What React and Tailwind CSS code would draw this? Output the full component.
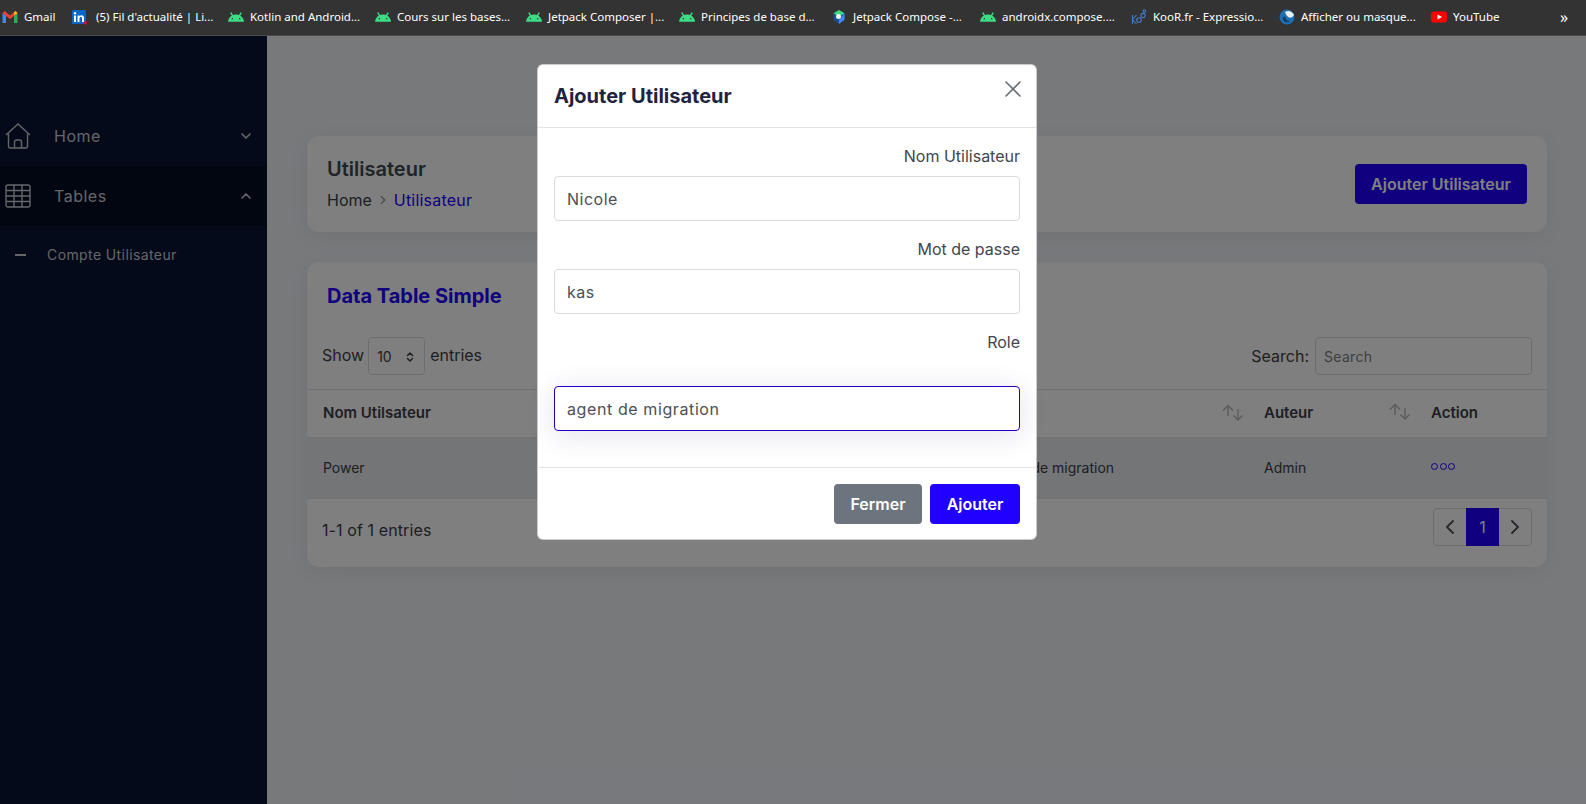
import React from 'react';
import { SiAndroid } from 'react-icons/si';
import { ChevronDown, ChevronUp, ChevronLeft, ChevronRight, X, ChevronsUpDown } from 'lucide-react';

const GmailIcon = () => (
  <svg width="16" height="16" viewBox="0 0 16 16">
    <path d="M.5 14V4l3.500 2.500V14z" fill="#4285f4" />
    <path d="M12 14V6.500L15.500 4v10z" fill="#34a853" />
    <path d="M.5 4 2.500 2 8 6.500 13.500 2l2 2L8 10z" fill="#ea4335" />
    <path d="M13.500 2l2 2-3.500 2.500V3.300z" fill="#fbbc04" />
  </svg>
);

const LinkedinIcon = () => (
  <svg width="18" height="16" viewBox="0 0 18 16">
    <rect x="0" y="1" width="14" height="14" rx="1" fill="#0a66c2" />
    <rect x="2" y="6.500" width="2" height="6.500" fill="#fff" />
    <circle cx="3" cy="4.200" r="1.200" fill="#fff" />
    <path d="M5.500 6.500h2v1c.5-.8 1.200-1.200 2.100-1.200 1.600 0 2.400 1 2.400 2.800V13h-2V9.500c0-1-.3-1.500-1.200-1.500s-1.300.6-1.300 1.500V13h-2z" fill="#fff" />
    <circle cx="13.500" cy="14" r="1.700" fill="#d11124" />
  </svg>
);

const AndroidIcon = () => <SiAndroid size={16} color="#3ddc84" />;

const ComposeIcon = () => (
  <svg width="16" height="16" viewBox="0 0 16 16">
    <path d="M8 1l5.500 3.200v6.600L8 15l-5.500-4.200V4.200z" fill="#1c4f8c" />
    <path d="M8 1l5.500 3.200L8 7.500 2.500 4.200z" fill="#3ddc84" />
    <path d="M13.500 4.200v6.600L8 15v-4z" fill="#4285f4" />
    <circle cx="7.500" cy="7.500" r="2.500" fill="#e8f4f0" />
  </svg>
);

const KoorIcon = () => (
  <svg width="16" height="16" viewBox="0 0 16 16" fill="none" stroke="#4a78c8" strokeWidth="1.100">
    <path d="M1.500 6v9M5.500 6l-4 4.500 4 4.500" />
    <circle cx="8" cy="11" r="2.300" />
    <circle cx="12" cy="6.500" r="2.100" />
    <circle cx="13.500" cy="2" r="1.300" />
  </svg>
);

const GlobeIcon = () => (
  <svg width="16" height="16" viewBox="0 0 16 16">
    <circle cx="8" cy="8" r="7.500" fill="#1f6fb2" />
    <path d="M6 3c3-2 7-1 9 3-1 2-3 3-5 2.500C8.500 8 7 6 6 3z" fill="#e8f1f8" />
    <path d="M6 7c0 3 2 5 5 5-2 2-5 1.500-6.500-.5S4.500 8 6 7z" fill="#0d3c66" />
  </svg>
);

const YoutubeIcon = () => (
  <svg width="16" height="16" viewBox="0 0 16 16">
    <rect x="0" y="2.500" width="16" height="11" rx="3" fill="#ff0000" />
    <path d="M6.500 5.500 11 8l-4.500 2.500z" fill="#fff" />
  </svg>
);

const bookmarks = [
  { label: 'Gmail', icon: <GmailIcon />, w: 'w-[70px]' },
  { label: "(5) Fil d'actualité | Li...", icon: <LinkedinIcon />, w: 'w-[156px]' },
  { label: 'Kotlin and Android...', icon: <AndroidIcon />, w: 'w-[147px]' },
  { label: 'Cours sur les bases...', icon: <AndroidIcon />, w: 'w-[151px]' },
  { label: 'Jetpack Composer |...', icon: <AndroidIcon />, w: 'w-[153px]' },
  { label: 'Principes de base d...', icon: <AndroidIcon />, w: 'w-[152px]' },
  { label: 'Jetpack Compose -...', icon: <ComposeIcon />, w: 'w-[149px]' },
  { label: 'androidx.compose....', icon: <AndroidIcon />, w: 'w-[151px]' },
  { label: 'KooR.fr - Expressio...', icon: <KoorIcon />, w: 'w-[148px]' },
  { label: 'Afficher ou masque...', icon: <GlobeIcon />, w: 'w-[152px]' },
  { label: 'YouTube', icon: <YoutubeIcon />, w: 'w-[100px]' },
];

const SortIcon = () => (
  <svg width="22" height="18" viewBox="0 0 22 18" fill="none" stroke="#b4b7bb" strokeWidth="1.400">
    <path d="M6 12V2M1 6.500 6 1.500l5 5" />
    <path d="M16 5v11M11.500 11.500l4.500 4.500 4.500-4.500" />
  </svg>
);

const BookmarksBar = () => (
  <div className="h-9 shrink-0 flex items-center pb-[2px] bg-[#333333] border-b border-[#4a4a4a]">
    {bookmarks.map((b) => (
      <div key={b.label} className={`${b.w} flex items-center gap-1.5 pl-[2px] shrink-0`}>
        {b.icon}
        <span className="text-[11.5px] text-white whitespace-nowrap font-['Noto_Sans',sans-serif]">{b.label}</span>
      </div>
    ))}
    <span className="ml-[31px] text-base text-white font-['Noto_Sans',sans-serif]">»</span>
  </div>
);

const Sidebar = () => (
  <aside className="w-[267px] shrink-0 bg-[#081432] pt-[70px] text-[#c9ccd4]">
    <div className="h-[60px] flex items-center pl-[5px] pr-[13px]">
      <svg width="26" height="26" viewBox="0 0 26 26" fill="none" stroke="currentColor" strokeWidth="1.400">
        <path d="M1 12 13 1l12 11" />
        <path d="M3.500 10.500V23a2 2 0 0 0 2 2h15a2 2 0 0 0 2-2V10.500" />
        <path d="M9.500 25v-6a2 2 0 0 1 2-2h3a2 2 0 0 1 2 2v6" />
      </svg>
      <span className="ml-[23px] flex-1 text-base tracking-[0.5px]">Home</span>
      <ChevronDown size={16} strokeWidth={2.500} />
    </div>
    <div className="h-[60px] flex items-center pl-[5px] pr-[13px] bg-[#040c20]">
      <svg width="26" height="26" viewBox="0 0 26 26" fill="none" stroke="currentColor" strokeWidth="1.400">
        <rect x="1" y="2" width="24" height="22" rx="2" />
        <path d="M1 7.500h24M1 13h24M1 18.500h24M9 2v22M17 2v22" />
      </svg>
      <span className="ml-[23px] flex-1 text-base tracking-[0.5px]">Tables</span>
      <ChevronUp size={16} strokeWidth={2.500} />
    </div>
    <div className="h-14 pt-[2px] flex items-center pl-[15px]">
      <span className="w-[11px] h-[2px] bg-current" />
      <span className="ml-[21px] text-sm tracking-[0.4px]">Compte Utilisateur</span>
    </div>
  </aside>
);

const DataTable = () => (
  <div className="mt-[30px] h-[305px] bg-white rounded-xl shadow-[0_4px_20px_rgba(0,0,0,0.06)] text-[#3a4046] flex flex-col">
    <h2 className="mt-5 ml-5 h-7 text-xl font-bold text-[#2000ff]">Data Table Simple</h2>
    <div className="mt-[27px] h-[38px] pl-[15px] pr-[15px] flex items-center justify-between">
      <div className="flex items-center">
        <span className="mb-[2px]">Show</span>
        <div className="ml-1 mr-[5px] w-[57px] h-[38px] pl-2 pr-2 pt-[2px] border border-[#d8dbe0] rounded flex items-center justify-between text-sm">
          <span>10</span>
          <ChevronsUpDown size={12} strokeWidth={3} />
        </div>
        <span className="mb-[2px]">entries</span>
      </div>
      <div className="flex items-center">
        <span className="mr-[6px]">Search:</span>
        <div className="w-[217px] h-[38px] px-2 pt-[2px] border border-[#d8dbe0] rounded flex items-center text-sm text-[#7a8086] tracking-[0.3px]">Search</div>
      </div>
    </div>
    <table className="mt-[14px] w-full table-fixed text-sm">
      <colgroup>
        <col className="w-[330px]" />
        <col className="w-[337px]" />
        <col className="w-[274px]" />
        <col className="w-[167px]" />
        <col />
      </colgroup>
      <thead>
        <tr className="h-12 border-y border-[#dfe2e6] text-left text-[15px] text-[#3c3c48]">
          <th className="pl-4 pb-[2px] font-semibold">Nom Utilsateur</th>
          <th className="pl-4 pb-[2px] font-semibold" />
          <th className="pl-4 pb-[2px] font-semibold">
            <div className="flex items-center justify-end pr-1"><SortIcon /></div>
          </th>
          <th className="pl-4 pb-[2px] font-semibold">
            <div className="flex items-center justify-between pr-1">Auteur<SortIcon /></div>
          </th>
          <th className="pl-4 pb-[2px] font-semibold">Action</th>
        </tr>
      </thead>
      <tbody>
        <tr className="h-[61px] bg-[#e6eaee] border-b border-[#dfe2e6]">
          <td className="pl-4">Power</td>
          <td className="pl-4" />
          <td className="pl-4">agent de migration</td>
          <td className="pl-4">Admin</td>
          <td className="pl-4">
            <span className="flex gap-[1.500px] mb-1">
              <span className="w-[7px] h-[7px] rounded-full border-[1.500px] border-[#2000ff]" />
              <span className="w-[7px] h-[7px] rounded-full border-[1.500px] border-[#2000ff]" />
              <span className="w-[7px] h-[7px] rounded-full border-[1.500px] border-[#2000ff]" />
            </span>
          </td>
        </tr>
      </tbody>
    </table>
    <div className="mt-[9px] pl-[15px] pr-[15px] flex items-center justify-between">
      <span className="mt-[6px] tracking-[0.1px]">1-1 of 1 entries</span>
      <div className="flex h-[38px] items-center border border-[#d8dbe0] rounded text-[#4a5056]">
        <span className="w-8 flex justify-center"><ChevronLeft size={24} strokeWidth={1.800} /></span>
        <span className="w-[33px] h-[38px] bg-[#2000ff] text-white flex items-center justify-center">1</span>
        <span className="w-8 flex justify-center"><ChevronRight size={24} strokeWidth={1.800} /></span>
      </div>
    </div>
  </div>
);

const Field = ({ label, value, className = '' }) => (
  <div className={className}>
    <div className="text-right h-6 leading-[22px]">{label}</div>
    <div className="mt-[7px] h-[45px] px-3 border border-[#d8dbe0] rounded flex items-center tracking-[0.5px] text-[#495057]">{value}</div>
  </div>
);

const Modal = () => (
  <div className="absolute inset-0 bg-black/50">
    <div className="absolute left-[537px] top-[28px] w-[500px] h-[476px] flex flex-col bg-white rounded-md border border-black/20 text-[#3f464d]">
      <div className="h-[63px] shrink-0 flex items-center justify-between pl-4 pr-[9px] border-b border-[#dfe2e6]">
        <h3 className="text-xl font-bold text-[#1f2340]">Ajouter Utilisateur</h3>
        <X size={28} strokeWidth={1.400} className="text-[#6b7075] mb-[14px]" />
      </div>
      <div className="flex-1 px-4 pt-[17px]">
        <Field label="Nom Utilisateur" value="Nicole" />
        <Field label="Mot de passe" value="kas" className="mt-[17px]" />
        <div className="mt-[17px]">
          <div className="text-right h-6 leading-[22px]">Role</div>
          <div className="mt-[31px] h-[45px] px-3 border border-[#2000c8] rounded flex items-center tracking-[0.6px] text-[#495057] shadow-[0_4px_28px_rgba(32,0,120,0.13)]">agent de migration</div>
        </div>
      </div>
      <div className="h-[72px] shrink-0 flex items-center justify-end gap-2 px-4 border-t border-[#dfe2e6]">
        <button className="w-[88px] h-10 rounded bg-[#6c757d] text-white font-semibold">Fermer</button>
        <button className="w-[90px] h-10 rounded bg-[#2000ff] text-white font-semibold">Ajouter</button>
      </div>
    </div>
  </div>
);

export default function App() {
  return (
    <div className="h-[804px] w-[1586px] overflow-hidden flex flex-col font-['Inter',sans-serif]">
      <BookmarksBar />
      <div className="relative flex-1 flex bg-[#eff2f7]">
        <Sidebar />
        <main className="flex-1 pt-[100px] pl-10 pr-[39px]">
          <div className="h-[96px] px-5 bg-white rounded-xl shadow-[0_4px_20px_rgba(0,0,0,0.06)] flex items-center justify-between text-[#3a4046]">
            <div className="mb-[1px]">
              <h1 className="text-xl font-semibold text-[#3f4850]">Utilisateur</h1>
              <div className="mt-[5px] flex items-center gap-1">
                <span>Home</span>
                <ChevronRight size={14} className="text-[#8a9096]" />
                <span className="text-[#2000ff] tracking-[0.2px]">Utilisateur</span>
              </div>
            </div>
            <button className="w-[172px] h-10 rounded bg-[#2000ff] text-white font-semibold">Ajouter Utilisateur</button>
          </div>
          <DataTable />
        </main>
        <Modal />
      </div>
    </div>
  );
}
